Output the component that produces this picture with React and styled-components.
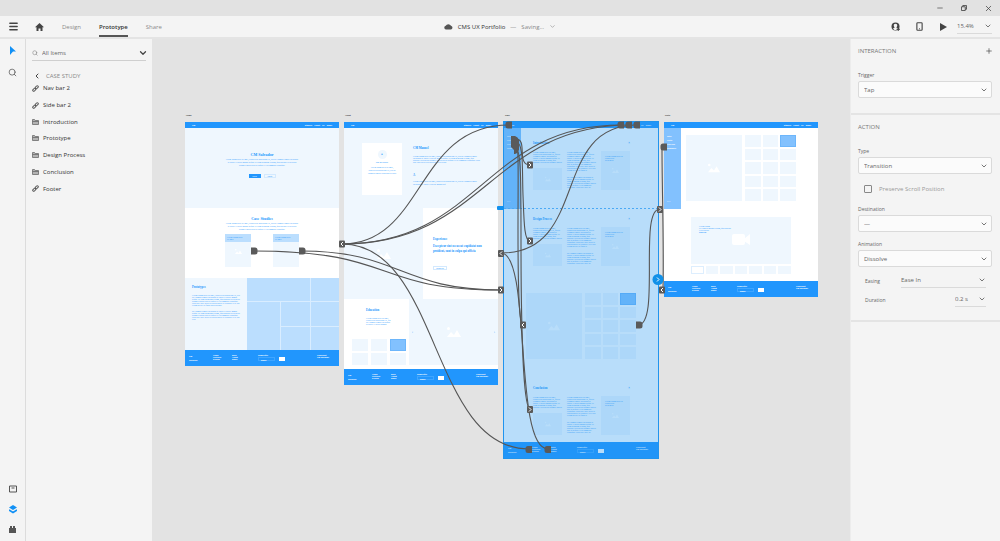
import React from 'react';
import styled, { createGlobalStyle } from 'styled-components';
import { ChevronDown, ChevronLeft, Minus, X, Menu, Search, Plus, Smartphone } from 'lucide-react';

const blue = '#2196fd';
const pale = '#eff7fe';
const soft = '#bbdefe';
const mid = '#82c1fe';
const ink = '#5a5a5a';

const lorem =
  'Lorem ipsum dolor sit amet, consectetur adipiscing elit, sed do eiusmod tempor incididunt ut labore et dolore magna aliqua. Ut enim ad minim veniam, quis nostrud exercitation ullamco laboris nisi ut aliquip ex ea commodo consequat. Duis aute irure dolor in reprehenderit in voluptate velit esse cillum dolore eu fugiat nulla pariatur. Excepteur sint occaecat cupidatat non proident, sunt in culpa qui officia deserunt mollit anim id est laborum.';

const GlobalStyle = createGlobalStyle`
  * { box-sizing: border-box; }
  body { margin: 0; }
  body, button, input, select {
    font-family: "Open Sans", "Noto Sans", sans-serif;
    font-size: 6px;
    color: #444;
  }
  button, input, select { border: 0; padding: 0; margin: 0; background: none; outline: none; }
  h1, h2, h3, p, ul { margin: 0; padding: 0; }
  svg { display: block; flex: none; }
`;

/* ---------- app frame ---------- */

const Window = styled.div`
  display: flex;
  flex-direction: column;
  height: 100vh;
  background: #f4f4f4;
`;

const TitleBar = styled.div`
  display: flex;
  flex: none;
  justify-content: flex-end;
  align-items: center;
  height: 16px;
  background: #e2e2e2;
`;

const WindowButton = styled.button`
  display: flex;
  align-items: center;
  justify-content: center;
  width: 24px;
  height: 16px;
`;

const Toolbar = styled.header`
  display: grid;
  flex: none;
  grid-template-columns: 1fr auto 1fr;
  height: 23px;
  padding: 0 8px;
  border-bottom: 2px solid #e4e4e4;
`;

const ToolbarLeft = styled.div`
  display: flex;
  align-items: center;
  gap: 16px;
`;

const IconButton = styled.button`
  display: flex;
  align-items: center;
  justify-content: center;
  width: ${props => props.$width || 10}px;
  color: ${props => props.$color || '#444'};
`;

const Tabs = styled.nav`
  display: flex;
  align-self: stretch;
  gap: 18px;
  margin-left: 2px;
`;

const Tab = styled.a`
  display: flex;
  align-items: center;
  font-weight: ${props => (props.$active ? 600 : 400)};
  color: ${props => (props.$active ? '#333' : '#8a8a8a')};
  text-decoration: none;
  border-top: 2px solid transparent;
  border-bottom: 2px solid ${props => (props.$active ? '#555' : 'transparent')};
`;

const DocTitle = styled.div`
  display: flex;
  align-items: center;
  gap: 5px;
  color: #888;
  strong { font-weight: 400; color: #333; }
`;

const ToolbarRight = styled.div`
  display: flex;
  align-items: center;
  justify-content: flex-end;
  gap: 9px;
`;

const IconGroup = styled.div`
  display: flex;
  gap: 14px;
`;

const Zoom = styled.div`
  width: 35px;
  select { color: #333; }
`;

const Body = styled.div`
  display: flex;
  flex: 1;
  min-height: 0;
`;

const ToolStrip = styled.aside`
  display: flex;
  flex-direction: column;
  align-items: center;
  gap: 12px;
  width: 26px;
  padding: 7px 0 8px;
  border-right: 1px solid #dcdcdc;
`;

const Spacer = styled.div`
  flex: 1;
`;

const LayersPanel = styled.aside`
  width: 126px;
  padding: 6px 6px 0;
`;

const SearchBox = styled.div`
  display: flex;
  align-items: center;
  gap: 4px;
  height: 16px;
  border-bottom: 1px solid #cfcfcf;
  input { flex: 1; min-width: 0; }
  input::placeholder { color: #666; opacity: 1; }
`;

const GroupTitle = styled.div`
  display: flex;
  align-items: center;
  gap: 5px;
  height: 9px;
  margin-top: 10px;
  color: #888;
`;

const LayerList = styled.ul`
  display: grid;
  grid-auto-rows: 1fr;
  height: 117px;
  list-style: none;
`;

const LayerItem = styled.li`
  display: flex;
  align-items: center;
  gap: 4px;
  color: #333;
`;

/* ---------- property panel ---------- */

const Inspector = styled.aside`
  width: 150px;
  border-left: 1px solid #ececec;
`;

const Section = styled.section`
  display: flex;
  flex-direction: column;
  padding: 7px 8px ${props => props.$bottom}px 7px;
  border-bottom: 2px solid #e4e4e4;
`;

const SectionHead = styled.div`
  display: flex;
  align-items: center;
  justify-content: space-between;
  height: 10px;
  margin-bottom: 13px;
  h2 { font-size: 6px; font-weight: 400; color: #777; }
`;

const Field = styled.div`
  display: flex;
  flex-direction: column;
  margin-bottom: ${props => props.$gap || 0}px;
  label { font-size: 5px; line-height: 12px; color: #666; }
`;

const SelectShell = styled.div`
  display: grid;
  align-items: center;
  width: ${props => props.$width || 'auto'};
  height: ${props => (props.$plain ? 14 : 17)}px;
  border: ${props => (props.$plain ? '0' : '1px solid #dadada')};
  border-bottom: 1px solid #dadada;
  border-radius: ${props => (props.$plain ? 0 : 2)}px;
  background: ${props => (props.$plain ? 'transparent' : '#fbfbfb')};
  padding: 0 ${props => (props.$plain ? 0 : 3)}px 0 ${props => (props.$plain ? 0 : 5)}px;
  select { grid-area: 1 / 1; width: 100%; appearance: none; color: #666; }
  svg { grid-area: 1 / 1; justify-self: end; pointer-events: none; color: #777; }
`;

const CheckRow = styled.label`
  display: flex;
  align-items: center;
  gap: 7px;
  height: 29px;
  padding-left: 6px;
  color: #999;
  input {
    appearance: none;
    width: 8px;
    height: 8px;
    border: 1px solid #888;
    border-radius: 1px;
  }
`;

const InlineField = styled.div`
  display: flex;
  align-items: center;
  justify-content: space-between;
  height: 19px;
  padding: 0 6px 0 7px;
  label { font-size: 5px; color: #666; }
`;

/* ---------- canvas and artboards ---------- */

const Canvas = styled.main`
  position: relative;
  flex: 1;
  overflow: hidden;
  background: #e3e3e3;
  font-family: "Liberation Serif", serif;
`;

const Artboard = styled.article`
  position: absolute;
  left: ${props => props.$x}px;
  top: 83px;
  display: flex;
  flex-direction: column;
  width: 154px;
  background: #fff;
  color: ${blue};
  outline: ${props => (props.$selected ? '1px solid #2094ee' : '0')};
`;

const BoardName = styled.span`
  position: absolute;
  left: 1px;
  top: -9px;
  font: bold 2px/4px "Liberation Sans", sans-serif;
  color: #333;
`;

const SelectionTint = styled.div`
  position: absolute;
  inset: 0;
  background: rgba(33, 150, 240, 0.32);
`;

const SiteNav = styled.nav`
  display: flex;
  align-items: center;
  gap: 2px;
  height: 6px;
  padding: 0 7px;
  background: ${blue};
  color: #fff;
  font: bold 2px/3px "Liberation Sans", sans-serif;
  span:first-child { flex: 1; }
`;

const SiteFooter = styled.footer`
  display: grid;
  grid-template-columns: 24px 19px 26px 21px 38px 1fr;
  height: 16px;
  padding: 4px 0 0 4px;
  background: ${blue};
  color: #fff;
  font: bold 2px/2px "Liberation Sans", sans-serif;
  div:first-child { line-height: 4px; }
`;

const FooterInput = styled.div`
  width: 17px;
  height: 4px;
  margin-top: 1px;
  padding-left: 2px;
  border: 1px solid #3fa5ff;
`;

const FooterButton = styled.div`
  width: 6px;
  height: 4px;
  margin-top: 3px;
  background: #fff;
`;

const Block = styled.div`
  display: flex;
  flex: ${props => props.$flex || 'none'};
  flex-direction: ${props => (props.$row ? 'row' : 'column')};
  align-items: ${props => props.$align || 'stretch'};
  justify-content: ${props => props.$justify || 'flex-start'};
  gap: ${props => props.$gap || 0}px;
  width: ${props => (props.$w ? props.$w + 'px' : 'auto')};
  height: ${props => (props.$h ? props.$h + 'px' : 'auto')};
  padding: ${props => props.$pad || 0};
  background: ${props => props.$bg || 'transparent'};
`;

const Heading = styled.h3`
  font-size: ${props => props.$size || 3}px;
  line-height: 6px;
  font-weight: 700;
`;

const Paragraph = styled.p`
  width: ${props => (props.$w ? props.$w + 'px' : 'auto')};
  height: ${props => props.$h}px;
  font-size: 2px;
  line-height: ${props => props.$leading || 2}px;
  text-align: ${props => props.$align || 'left'};
`;

const Lead = styled.p`
  font-size: 3px;
  line-height: 5px;
  font-weight: 700;
`;

const MiniButton = styled.span`
  width: ${props => props.$w || 12}px;
  height: 4px;
  border: 1px solid ${props => (props.$solid ? blue : '#d3e9fe')};
  background: ${props => (props.$solid ? blue : 'transparent')};
  color: ${props => (props.$solid ? '#fff' : blue)};
  font: 2px/2px "Liberation Sans", sans-serif;
  text-align: center;
`;

const Avatar = styled.div`
  width: 9px;
  height: 9px;
  border-radius: 50%;
  background: ${pale};
  font: bold 3px/9px "Liberation Sans", sans-serif;
  text-align: center;
`;

const Mosaic = styled.div`
  display: grid;
  flex: 1;
  grid-template: 23px 24px 1fr / 33px 29px 1fr;
  gap: 1px;
  background: #d9edff;
  div { background: ${soft}; }
  div:nth-child(1) { grid-column: 1 / 3; }
  div:nth-child(3) { grid-row: 2 / 4; }
`;

const ThumbGrid = styled.div`
  display: grid;
  grid-template-columns: repeat(3, 1fr);
  grid-auto-rows: 1fr;
  gap: ${props => props.$gap || '2px'};
  width: ${props => props.$w}px;
  height: ${props => props.$h}px;
  div { background: ${pale}; }
  div:nth-child(3) { background: ${mid}; outline: 1px solid #6db6fb; outline-offset: -1px; }
`;

const FilmStrip = styled.div`
  display: grid;
  grid-template-columns: repeat(7, 1fr);
  gap: 2px;
  height: 8px;
  margin-top: 2px;
  div { background: ${pale}; }
  div:first-child { background: #fff; border: 1px solid #ddeefe; }
`;

const SideNav = styled.div`
  width: 17px;
  height: 81px;
  padding: 7px 3px;
  display: flex;
  flex-direction: column;
  gap: 2px;
  background: ${mid};
  color: #fff;
  font: bold 2px/2px "Liberation Sans", sans-serif;
  span:last-child { margin-top: auto; }
`;

const Wires = styled.svg`
  position: absolute;
  left: 0;
  top: 0;
`;

/* ---------- icons ---------- */

const PictureIcon = ({ size = 14 }) => (
  <svg width={size} height={size} viewBox="0 0 14 14" fill="#fff">
    <circle cx="1.5" cy="3.5" r="1.5" />
    <path d="M0 12l4-5 3 3 3-5 4 7z" />
  </svg>
);

const CloudIcon = () => (
  <svg width="9" height="7" viewBox="0 0 18 13" fill="#555">
    <path d="M4 12.5a3.7 3.7 0 0 1-.6-7.3A6 6 0 0 1 14 5a3.9 3.9 0 0 1 .2 7.5z" />
  </svg>
);

const HomeIcon = () => (
  <svg width="9" height="8" viewBox="0 0 18 16" fill="#444">
    <path d="M9 0l9 8.500h-3V16h-4v-5H7v5H3V8.500H0z" />
  </svg>
);

const RestoreIcon = () => (
  <svg width="6" height="6" viewBox="0 0 12 12" fill="none" stroke="#333" strokeWidth="1.500">
    <path d="M1 3.500h7.500V11H1zM3.500 3.500V1H11v7.500H8.500" />
  </svg>
);

const LinkIcon = () => (
  <svg width="7" height="7" viewBox="0 0 14 14" fill="none" stroke="#555" strokeWidth="2">
    <rect x="-3.500" y="-2" width="7" height="4" rx="2" transform="translate(4.500 9.500) rotate(-45)" />
    <rect x="-3.500" y="-2" width="7" height="4" rx="2" transform="translate(9.500 4.500) rotate(-45)" />
  </svg>
);

const FolderIcon = () => (
  <svg width="7" height="6" viewBox="0 0 14 12" fill="#b4b4b4" stroke="#666" strokeWidth="1.500">
    <path d="M1 1h4l1.500 2H13v8H1zM1 5h12" />
  </svg>
);

/* ---------- site pages ---------- */

const Board = ({ name, x, selected, children }) => (
  <Artboard $x={x} $selected={selected}>
    <BoardName>{name}</BoardName>
    <SiteNav>
      <span>CM</span>
      <span>Studies</span>
      <span>About</span>
      <span>CV</span>
      <span>Email</span>
    </SiteNav>
    {children}
    <SiteFooter>
      <div>CM<br />Salvador</div>
      <div>Home<br />Portfolio<br />Design</div>
      <div>Blog<br />About<br />Email</div>
      <div>Newsletter<FooterInput>Email</FooterInput></div>
      <FooterButton />
      <div>Copyright<br />CM Salvador</div>
    </SiteFooter>
    {selected && <SelectionTint />}
  </Artboard>
);

const Gallery = ({ pad }) => (
  <Block $row $gap={3} $pad={pad}>
    <Block $w={56} $h={66} $bg={pale} $align="center" $justify="center"><PictureIcon size={12} /></Block>
    <ThumbGrid $w={51} $h={66}>
      {Array.from({ length: 15 }, (_, i) => <div key={i} />)}
    </ThumbGrid>
  </Block>
);

const TextSection = ({ title, pad }) => (
  <Block $pad={pad}>
    <Block $row $justify="space-between" $w={97} $h={11}>
      <Heading>{title}</Heading>
      <Heading>×</Heading>
    </Block>
    <Block $row $gap={5}>
      <Block $w={29} $gap={3}>
        <Paragraph $h={14}>{lorem.slice(0, 190)}</Paragraph>
        <Block $h={22} $bg={pale} $align="center" $justify="center"><PictureIcon size={6} /></Block>
      </Block>
      <Block $w={29} $gap={2}>
        <Paragraph $h={23}>{lorem.slice(0, 320)}</Paragraph>
        <Paragraph $h={14}>{lorem.slice(60, 250)}</Paragraph>
      </Block>
      <Block $w={29} $h={39} $bg={pale} $pad="4px" $gap={6}>
        <Paragraph $h={6}>Lorem ipsum dolor sit<br />consectetur<br />Read more</Paragraph>
        <Block $align="center"><PictureIcon size={7} /></Block>
      </Block>
    </Block>
  </Block>
);

const HomeBoard = () => (
  <Board name="Home" x={33}>
    <Block $h={80} $bg={pale} $align="center" $pad="24px 0 0">
      <Heading $size={4}>CM Salvador</Heading>
      <Paragraph $w={74} $h={9} $leading={3} $align="center">{lorem.slice(0, 232)}</Paragraph>
      <Block $row $gap={3} $pad="7px 0 0">
        <MiniButton $solid>Work</MiniButton>
        <MiniButton>About</MiniButton>
      </Block>
    </Block>
    <Block $h={70} $align="center" $pad="8px 0 0">
      <Heading $size={4}>Case Studies</Heading>
      <Paragraph $w={74} $h={9} $leading={3} $align="center">{lorem.slice(0, 232)}</Paragraph>
      <Block $row $gap={22} $pad="3px 0 0">
        {[0, 1].map(i => (
          <Block key={i} $w={26} $h={33} $bg={pale} $align="center" $gap={6}>
            <Block $w={26} $h={8} $bg={soft} $pad="2px">
              <Paragraph $h={4}>Lorem ipsum dolor<br />Sit amet</Paragraph>
            </Block>
            {i === 0 && <PictureIcon size={7} />}
          </Block>
        ))}
      </Block>
    </Block>
    <Block $row $h={72}>
      <Block $w={62} $bg={pale} $pad="6px 7px" $gap={4}>
        <Heading>Prototypes</Heading>
        <Paragraph $h={12}>{lorem.slice(0, 335)}</Paragraph>
        <Paragraph $h={10}>{lorem.slice(60, 300)}</Paragraph>
      </Block>
      <Mosaic>
        {Array.from({ length: 7 }, (_, i) => <div key={i} />)}
      </Mosaic>
    </Block>
  </Board>
);

const AboutBoard = () => (
  <Board name="About" x={192}>
    <Block $row $h={80} $bg={pale} $pad="15px 18px 0" $gap={11}>
      <Block $w={40} $h={52} $bg="#fff" $align="center" $pad="7px 4px" $gap={2}>
        <Avatar>●</Avatar>
        <Paragraph $h={3} $leading={3}><b>CM MANUEL</b></Paragraph>
        <Paragraph $w={32} $h={9} $leading={3} $align="center">{lorem.slice(0, 98)}</Paragraph>
      </Block>
      <Block $w={67} $pad="2px 0 0">
        <Heading>CM Manuel</Heading>
        <Block $h={4} />
        <Paragraph $h={8}>{lorem.slice(0, 280)}</Paragraph>
        <Block $h={9} />
        <Heading>A</Heading>
        <Block $h={2} />
        <Paragraph $h={6} $leading={3}>{lorem.slice(0, 120)}</Paragraph>
      </Block>
    </Block>
    <Block $row $h={91}>
      <Block $w={79} $bg={pale} $align="center" $justify="center"><PictureIcon /></Block>
      <Block $pad="28px 10px" $gap={2}>
        <Heading>Experience</Heading>
        <Lead>Excepteur sint occaecat cupidatat non<br />proident, sunt in culpa qui officia</Lead>
        <Block $h={8} />
        <MiniButton $w={14}>Read on</MiniButton>
      </Block>
    </Block>
    <Block $row $h={66}>
      <Block $w={65} $pad="8px 0 0 8px">
        <Block $pad="0 0 0 14px" $gap={4}>
          <Heading>Education</Heading>
          <Paragraph $w={26} $h={8}>{lorem.slice(0, 115)}</Paragraph>
        </Block>
        <Spacer />
        <ThumbGrid $w={54} $h={26} $gap="2px 3px">
          {Array.from({ length: 6 }, (_, i) => <div key={i} />)}
        </ThumbGrid>
      </Block>
      <Block $row $flex={1} $bg={pale} $align="center" $justify="space-between" $pad="0 3px">
        <Heading>‹</Heading><PictureIcon /><Heading>›</Heading>
      </Block>
    </Block>
    <Block $h={4} />
  </Board>
);

const Side = () => (
  <SideNav>
    <span>Intro</span>
    <span>Proto</span>
    <span>Process</span>
    <span>Summary</span>
    <span>• • •</span>
  </SideNav>
);

const CaseBoard = () => (
  <Board name="Case" x={352} selected>
    <Block $h={314}>
      <Block $row>
        <Side />
        <TextSection title="Introduction" pad="12px 0 0 12px" />
      </Block>
      <TextSection title="Design Process" pad="7px 0 0 29px" />
      <Gallery pad="27px 0 0 22px" />
      <TextSection title="Conclusion" pad="26px 0 0 29px" />
    </Block>
  </Board>
);

const VideoBoard = () => (
  <Board name="Proto" x={512}>
    <Block $h={153}>
      <Block $row>
        <Side />
        <Gallery pad="7px 0 0 5px" />
      </Block>
      <Block $pad="8px 27px 0">
        <Block $h={47} $bg={pale} $align="center" $pad="8px 8px 0">
          <Paragraph $w={84} $h={8}>Lorem ipsum<br />Ut enim ad minim veniam, quis nostrud<br />Exercitation<br /><b>Read on</b></Paragraph>
          <svg width="18" height="14" viewBox="0 0 18 14" fill="#fff">
            <rect x="0" y="1" width="13" height="11" rx="2" />
            <path d="M12 6l6-5v11l-6-4z" />
          </svg>
        </Block>
        <FilmStrip>
          {Array.from({ length: 7 }, (_, i) => <div key={i} />)}
        </FilmStrip>
      </Block>
    </Block>
  </Board>
);

/* wires between the artboards */
const wires = [
  'M342 244C425 244 415 125 509 125',
  'M342 244C480 244 485 125 621 125',
  'M342 244C485 244 490 126 629 125',
  'M501 253C590 253 550 125 637 125',
  'M253 251C400 251 370 290 501 290',
  'M301 251C400 251 400 290 501 290',
  'M342 244C440 244 430 449 529 449',
  'M501 253C532 253 513 449 548 449',
  'M516 139C528 139 516 165 530 165',
  'M516 142C524 142 522 170 523 195S524 241 530 241',
  'M516 146C519 146 518 170 518 230S519 325 523 325',
  'M516 149C521 149 521 180 521 240C521 340 524 409 530 409',
  'M638 325C661 325 638 209 660 209',
  'M662 148C662 190 664 240 663 290',
];

// [x, y, round side]
const sources = [
  [509, 125, -1], [621, 125, -1], [629, 125, -1], [637, 125, -1],
  [254, 251, 1], [302, 251, 1], [639, 325, 1], [664, 147, -1],
  [529, 449.5, -1], [548, 449.5, -1],
];

// [x, y, chevron direction]
const targets = [
  [342, 244, -1], [501, 253.5, -1], [501, 290, 1], [530, 165, 1], [530, 241, 1],
  [523, 325, -1], [530, 409.5, 1], [660, 209.5, 1], [662, 290, -1],
];

const Connections = () => (
  <Wires width="698" height="502" viewBox="152 39 698 502" fill="none">
    <path d="M504 208.500H658" stroke="#4ba9f5" strokeDasharray="2 2" />
    <rect x="497" y="206" width="7" height="4" rx="1" fill="#1190ee" />
    {wires.map(d => <path key={d} d={d} stroke="#555" strokeWidth="1.100" />)}
    {sources.map(([x, y, s]) => (
      <path
        key={x + '-' + y}
        transform={`translate(${x} ${y}) scale(${s} 1)`}
        d="M-3-3.500H1a2.500 2.500 0 0 1 2.500 2.500v2a2.500 2.500 0 0 1-2.500 2.500H-3z"
        fill={ink}
      />
    ))}
    <path d="M511 136h4q3 1 4 4v10q-1 3-4 4h-1v-4l-3-3z" fill={ink} />
    {targets.map(([x, y, s]) => (
      <g key={x + '-' + y} transform={`translate(${x} ${y}) scale(${s} 1)`}>
        <rect x="-3" y="-3.500" width="6" height="7" rx="1" fill={ink} />
        <path d="M-1-2l2 2-2 2" stroke="#fff" />
      </g>
    ))}
    <circle cx="658" cy="279.500" r="5.500" fill="#1190e8" />
    <path d="M657 277.500l2 2-2 2" stroke="#fff" />
  </Wires>
);

const Dropdown = ({ id, value, plain, width, label }) => (
  <SelectShell $plain={plain} $width={width}>
    <select id={id} defaultValue={value} aria-label={label}>
      <option>{value}</option>
    </select>
    <ChevronDown size={8} strokeWidth={3} />
  </SelectShell>
);

const layers = [
  ['Nav bar 2', LinkIcon],
  ['Side bar 2', LinkIcon],
  ['Introduction', FolderIcon],
  ['Prototype', FolderIcon],
  ['Design Process', FolderIcon],
  ['Conclusion', FolderIcon],
  ['Footer', LinkIcon],
];

export default function App() {
  return (
    <Window>
      <GlobalStyle />
      <TitleBar>
        <WindowButton aria-label="Minimize"><Minus size={8} /></WindowButton>
        <WindowButton aria-label="Restore"><RestoreIcon /></WindowButton>
        <WindowButton aria-label="Close"><X size={9} /></WindowButton>
      </TitleBar>

      <Toolbar>
        <ToolbarLeft>
          <IconButton aria-label="Menu"><Menu size={11} strokeWidth={3} /></IconButton>
          <IconButton aria-label="Home"><HomeIcon /></IconButton>
          <Tabs>
            <Tab href="#design">Design</Tab>
            <Tab href="#prototype" $active>Prototype</Tab>
            <Tab href="#share">Share</Tab>
          </Tabs>
        </ToolbarLeft>
        <DocTitle>
          <CloudIcon />
          <strong>CMS UX Portfolio</strong>
          <span>—</span>
          <span>Saving...</span>
          <ChevronDown size={7} />
        </DocTitle>
        <ToolbarRight>
          <IconGroup>
            <IconButton aria-label="Account">
              <svg width="9" height="9" viewBox="0 0 18 18">
                <circle cx="9" cy="9" r="8" fill="#444" />
                <path d="M9 3.500c2.500 0 3.500 1.500 3.500 3.500 0 1.500-.8 2.800-1.500 3.500v1c2 .5 2.500 1 3 2l-3 2.500H7l-3-2.500c.5-1 1-1.500 3-2v-1C6.300 9.800 5.500 8.500 5.500 7c0-2 1-3.500 3.500-3.500z" fill="#f4f4f4" />
                <path d="M14.500 11v7M11 14.500h7" stroke="#444" strokeWidth="2" />
              </svg>
            </IconButton>
            <IconButton aria-label="Device preview"><Smartphone size={9} strokeWidth={3} /></IconButton>
            <IconButton aria-label="Play">
              <svg width="7" height="8" viewBox="0 0 7 8" fill="#444"><path d="M0 0l7 4-7 4z" /></svg>
            </IconButton>
          </IconGroup>
          <Zoom>
            <Dropdown id="zoom" value="15.4%" label="Zoom level" plain />
          </Zoom>
        </ToolbarRight>
      </Toolbar>

      <Body>
        <ToolStrip>
          <IconButton aria-label="Select">
            <svg width="8" height="10" viewBox="0 0 8 10" fill="#1190f5"><path d="M1 0l6 5.500H4L1 9z" /></svg>
          </IconButton>
          <IconButton aria-label="Zoom tool" $color="#555"><Search size={9} /></IconButton>
          <Spacer />
          <IconButton aria-label="Assets">
            <svg width="8" height="8" viewBox="0 0 8 8" fill="none" stroke="#555"><path d="M.5 1h7v6h-7zM2.500 3h3" /></svg>
          </IconButton>
          <IconButton aria-label="Layers">
            <svg width="8" height="9" viewBox="0 0 8 9" fill="#1190f5">
              <path d="M4 0l4 2.500-4 2.500-4-2.500z" />
              <path d="M0 5l4 2.500L8 5" fill="none" stroke="#1190f5" strokeWidth="1.500" />
            </svg>
          </IconButton>
          <IconButton aria-label="Plugins">
            <svg width="7" height="7" viewBox="0 0 7 7" fill="#555"><path d="M0 2h1V0h2v2h1V0h2v2h1v5H0z" /></svg>
          </IconButton>
        </ToolStrip>

        <LayersPanel>
          <SearchBox>
            <Search size={6} color="#777" />
            <input type="search" aria-label="Filter items" placeholder="All Items" />
            <IconButton aria-label="Show filters" $width={7}><ChevronDown size={10} strokeWidth={3} /></IconButton>
          </SearchBox>
          <GroupTitle>
            <IconButton aria-label="Back" $width={9}><ChevronLeft size={8} strokeWidth={3} /></IconButton>
            CASE STUDY
          </GroupTitle>
          <LayerList>
            {layers.map(([name, Icon]) => (
              <LayerItem key={name}>
                <Icon />
                {name}
              </LayerItem>
            ))}
          </LayerList>
        </LayersPanel>

        <Canvas>
          <HomeBoard />
          <AboutBoard />
          <CaseBoard />
          <VideoBoard />
          <Connections />
        </Canvas>

        <Inspector>
          <Section $bottom={15}>
            <SectionHead>
              <h2>INTERACTION</h2>
              <IconButton aria-label="Add interaction" $width={6}><Plus size={8} /></IconButton>
            </SectionHead>
            <Field>
              <label htmlFor="trigger">Trigger</label>
              <Dropdown id="trigger" value="Tap" />
            </Field>
          </Section>
          <Section $bottom={11}>
            <SectionHead><h2>ACTION</h2></SectionHead>
            <Field>
              <label htmlFor="type">Type</label>
              <Dropdown id="type" value="Transition" />
            </Field>
            <CheckRow><input type="checkbox" />Preserve Scroll Position</CheckRow>
            <Field $gap={6}>
              <label htmlFor="destination">Destination</label>
              <Dropdown id="destination" value="—" />
            </Field>
            <Field $gap={4}>
              <label htmlFor="animation">Animation</label>
              <Dropdown id="animation" value="Dissolve" />
            </Field>
            <InlineField>
              <label htmlFor="easing">Easing</label>
              <Dropdown id="easing" value="Ease In" plain width="85px" />
            </InlineField>
            <InlineField>
              <label htmlFor="duration">Duration</label>
              <Dropdown id="duration" value="0.2 s" plain width="31px" />
            </InlineField>
          </Section>
        </Inspector>
      </Body>
    </Window>
  );
}
